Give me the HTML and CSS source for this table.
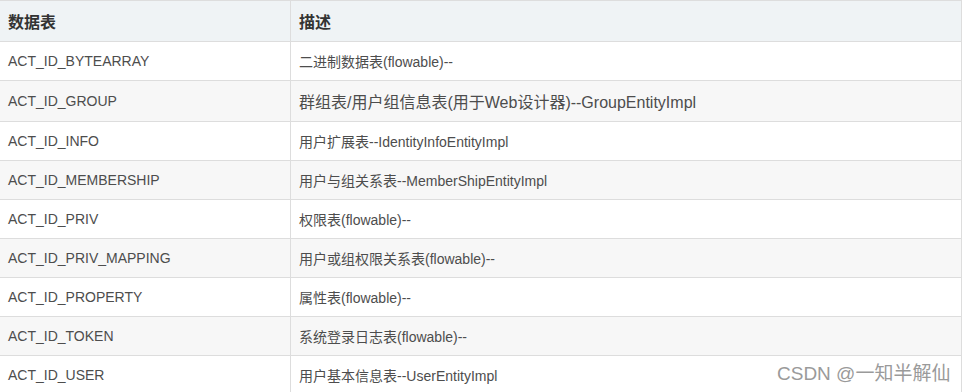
FILE: index.html
```html
<!DOCTYPE html>
<html lang="zh-CN">
<head>
<meta charset="utf-8">
<title>数据表</title>
<link rel="stylesheet" href="styles.css">
</head>
<body>
<div class="wrap">
  <table class="tbl">
    <thead>
      <tr><th class="c1">数据表</th><th class="c2">描述</th></tr>
    </thead>
    <tbody>
      <tr><td class="c1">ACT_ID_BYTEARRAY</td><td class="c2">二进制数据表(flowable)--</td></tr>
      <tr class="tall"><td class="c1">ACT_ID_GROUP</td><td class="c2 big">群组表/用户组信息表(用于Web设计器)--GroupEntityImpl</td></tr>
      <tr><td class="c1">ACT_ID_INFO</td><td class="c2">用户扩展表--IdentityInfoEntityImpl</td></tr>
      <tr><td class="c1">ACT_ID_MEMBERSHIP</td><td class="c2">用户与组关系表--MemberShipEntityImpl</td></tr>
      <tr><td class="c1">ACT_ID_PRIV</td><td class="c2">权限表(flowable)--</td></tr>
      <tr><td class="c1">ACT_ID_PRIV_MAPPING</td><td class="c2">用户或组权限关系表(flowable)--</td></tr>
      <tr><td class="c1">ACT_ID_PROPERTY</td><td class="c2">属性表(flowable)--</td></tr>
      <tr><td class="c1">ACT_ID_TOKEN</td><td class="c2">系统登录日志表(flowable)--</td></tr>
      <tr><td class="c1">ACT_ID_USER</td><td class="c2">用户基本信息表--UserEntityImpl</td></tr>
    </tbody>
  </table>
  <div class="mark">CSDN @一知半解仙</div>
</div>
</body>
</html>
```
FILE: styles.css
```css
html, body {
  margin: 0;
  padding: 0;
  background: #ffffff;
  overflow: hidden;
}
body {
  font-family: "Liberation Sans", Arial, "Noto Sans CJK SC", sans-serif;
  color: #4d4d4d;
}
.wrap {
  position: relative;
  width: 963px;
  height: 392px;
  overflow: hidden;
}
.tbl {
  margin-left: -1px;
  width: 963px;
  border-collapse: separate;
  border-spacing: 0;
  border-top: 1px solid #dddddd;
  border-left: 1px solid #dddddd;
  table-layout: fixed;
}
.tbl th, .tbl td {
  border-right: 1px solid #dddddd;
  border-bottom: 1px solid #dddddd;
  padding: 0 8px;
  text-align: left;
  vertical-align: middle;
  white-space: nowrap;
  box-sizing: border-box;
}
.tbl .c1 { width: 291px; }
.tbl th {
  height: 41px;
  background: #eff3f5;
  color: #333333;
  font-size: 16px;
  font-weight: bold;
}
.tbl td {
  height: 39px;
  font-size: 14px;
}
.tbl tbody tr:nth-child(even) td {
  background: #f7f7f7;
}
.tbl tr.tall td {
  height: 41px;
}
.tbl td.big {
  font-size: 16px;
}
.mark {
  position: absolute;
  left: 777px;
  top: 361px;
  font-size: 19px;
  line-height: 26px;
  color: #9a9a9a;
  white-space: nowrap;
  text-shadow: 0 0 1px #ffffff;
}
```
